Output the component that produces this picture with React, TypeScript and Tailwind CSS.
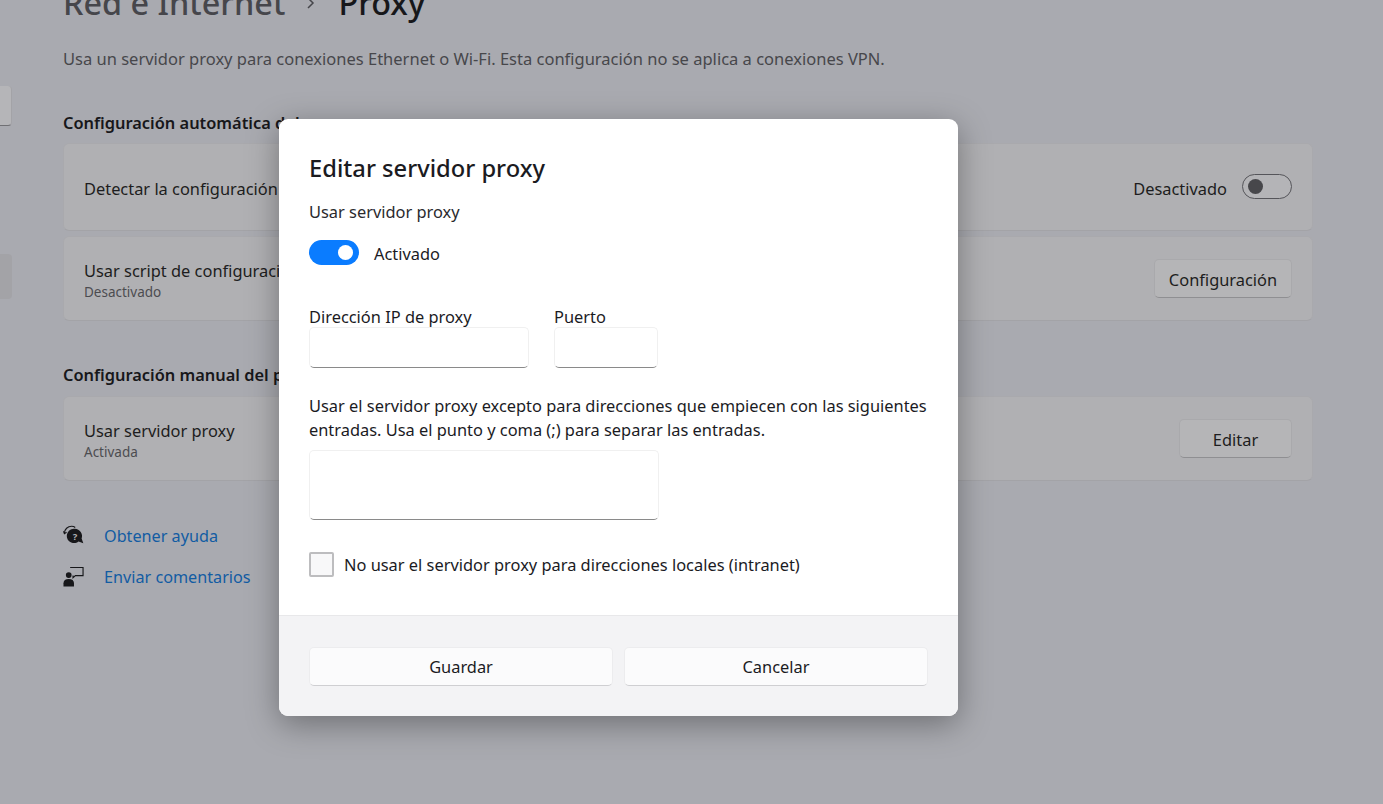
const font = { fontFamily: '"Noto Sans", "Open Sans", sans-serif' };

function Row({ title, sub, children, tall }: { title: string; sub?: string; children: React.ReactNode; tall?: boolean }) {
  return (
    <div className={`flex items-center justify-between rounded-[6px] bg-[#b0b0b3] border border-[#a9a9ad] border-b-[#a3a3a7] pl-[20px] pr-[20px] ${tall ? "h-[88px]" : "h-[85px]"}`}>
      <div className="flex flex-col pt-[4px]">
        <span className="text-[16.4px] leading-[22px] text-[#1d1d20]">{title}</span>
        {sub && <span className="text-[13.5px] leading-[20px] text-[#4c4c50]">{sub}</span>}
      </div>
      {children}
    </div>
  );
}

function BgButton({ w, children }: { w: string; children: React.ReactNode }) {
  return (
    <div className={`${w} h-[39px] pt-[4px] flex items-center justify-center rounded-[5px] bg-[#b5b5b7] border border-[#a9a9ac] border-b-[#8f8f92] text-[16.4px] text-[#1d1d20]`}>
      {children}
    </div>
  );
}

function HelpIcon() {
  return (
    <svg width="21" height="22" viewBox="0 0 22 22" className="shrink-0">
      <path d="M1.5 8C1.5 4 5 .8 9 .8c1.5 0 2.7.4 3.8 1.3" fill="none" stroke="#17171a" strokeWidth="1.2" />
      <path d="M.5 6l1 2.6L3.7 7" fill="none" stroke="#17171a" strokeWidth="1.2" />
      <path d="M12.5 3.5a7.5 7.5 0 0 1 7 10l1.8 5-5-1.8A7.5 7.5 0 1 1 12.5 3.5z" fill="#17171a" />
      <text x="12.5" y="15" fontSize="10" fontWeight="700" textAnchor="middle" fill="#b0b0b3" fontFamily="Noto Sans">?</text>
    </svg>
  );
}

function FeedbackIcon() {
  return (
    <svg width="21" height="22" viewBox="0 0 22 22" className="shrink-0">
      <circle cx="6" cy="9" r="3" fill="#17171a" />
      <path d="M.5 21v-3.5C.5 14.5 2.5 13 6 13s5.5 1.5 5.5 4.5V21z" fill="#17171a" />
      <path d="M7.5 1h13.5v8.5h-8l-2.5 2.2V9.5" fill="none" stroke="#17171a" strokeWidth="1.2" />
    </svg>
  );
}

function Field({ label, w }: { label: string; w: string }) {
  return (
    <div className={`${w} flex flex-col`}>
      <span className="text-[16.4px] leading-[20px] text-[#1b1b1f]">{label}</span>
      <div className="h-[41px] rounded-[5px] bg-white border border-[#f0f0f0] border-b-[#8a8a8a]" />
    </div>
  );
}

function DialogButton({ children }: { children: React.ReactNode }) {
  return (
    <div className="flex-1 h-[39px] pt-[2px] flex items-center justify-center rounded-[5px] bg-[#fbfbfc] border border-[#ececee] border-b-[#cfcfd2] text-[16.4px] text-[#1b1b1f]">
      {children}
    </div>
  );
}

export default function App() {
  return (
    <div style={font} className="relative h-[804px] w-[1383px] overflow-hidden bg-[#a9aab0] flex">
      <aside className="w-[12px] shrink-0 flex flex-col">
        <div className="mt-[86px] h-[40px] rounded-r-[4px] bg-[#b5b5b8] border-r border-[#a3a3a7] border-b-[1px] border-b-[#707074]" />
        <div className="mt-[128px] h-[45px] rounded-r-[4px] bg-[#a3a3a7]" />
      </aside>
      <main className="ml-[51px] w-[1250px] flex flex-col">
        <div className="-mt-[22px] h-[48px] flex items-center">
          <span className="text-[32.4px] leading-[40px] font-medium text-[#46464b]">Red e Internet</span>
          <svg width="12" height="14" viewBox="0 0 12 14" className="ml-[20px] mr-[21px] mt-[1px]">
            <path d="M3 2l5 5-5 5" fill="none" stroke="#46464b" strokeWidth="1.5" />
          </svg>
          <span className="text-[32.4px] leading-[40px] font-medium text-[#17171a]">Proxy</span>
        </div>
        <p className="mt-[22px] text-[16.5px] leading-[22px] text-[#47474b]">
          Usa un servidor proxy para conexiones Ethernet o Wi-Fi. Esta configuración no se aplica a conexiones VPN.
        </p>
        <h2 className="mt-[42px] text-[16.4px] leading-[22px] font-semibold text-[#17171a]">Configuración automática del proxy</h2>
        <div className="mt-[9px] flex flex-col gap-[5px]">
          <Row title="Detectar la configuración automáticamente" tall>
            <div className="flex items-center gap-[15px]">
              <span className="mt-[4px] text-[16.4px] text-[#1d1d20]">Desactivado</span>
              <div className="w-[50px] h-[25px] rounded-full border border-[#55555a] bg-[#b4b4b7] flex items-center pl-[5px]">
                <div className="w-[15px] h-[15px] rounded-full bg-[#47474b]" />
              </div>
            </div>
          </Row>
          <Row title="Usar script de configuración" sub="Desactivado">
            <BgButton w="w-[138px]">Configuración</BgButton>
          </Row>
        </div>
        <h2 className="mt-[43px] text-[16.4px] leading-[22px] font-semibold text-[#17171a]">Configuración manual del proxy</h2>
        <div className="mt-[10px]">
          <Row title="Usar servidor proxy" sub="Activada">
            <BgButton w="w-[113px]">Editar</BgButton>
          </Row>
        </div>
        <div className="mt-[44px] flex items-center gap-[20px]">
          <HelpIcon />
          <span className="text-[16.2px] leading-[22px] text-[#125ca3]">Obtener ayuda</span>
        </div>
        <div className="mt-[19px] flex items-center gap-[20px]">
          <FeedbackIcon />
          <span className="text-[16.2px] leading-[22px] text-[#125ca3]">Enviar comentarios</span>
        </div>
      </main>

      <div className="absolute left-[279px] top-[119px] w-[679px] h-[597px] rounded-[9px] bg-white overflow-hidden flex flex-col shadow-[0_8px_32px_rgba(0,0,0,0.35)]">
        <div className="flex-1 pl-[30px] pr-[30px] flex flex-col">
          <h1 className="mt-[32px] text-[23.7px] leading-[34px] font-medium text-[#1b1b1f]">Editar servidor proxy</h1>
          <span className="mt-[16px] text-[16.4px] leading-[22px] text-[#2a2a2e]">Usar servidor proxy</span>
          <div className="mt-[17px] flex items-start gap-[15px]">
            <div className="w-[50px] h-[25px] rounded-full bg-[#0a7cff] flex items-center justify-end pr-[6px]">
              <div className="w-[15px] h-[15px] rounded-full bg-white" />
            </div>
            <span className="pt-[1px] text-[16.4px] leading-[25px] text-[#1b1b1f]">Activado</span>
          </div>
          <div className="mt-[41px] flex gap-[25px]">
            <Field label="Dirección IP de proxy" w="w-[220px]" />
            <Field label="Puerto" w="w-[104px]" />
          </div>
          <p className="mt-[26px] -mr-[10px] text-[16.4px] leading-[24px] text-[#1b1b1f]">
            Usar el servidor proxy excepto para direcciones que empiecen con las siguientes entradas. Usa el punto y coma (;) para separar las entradas.
          </p>
          <div className="mt-[8px] w-[350px] h-[70px] rounded-[5px] bg-white border border-[#f0f0f0] border-b-[#8a8a8a]" />
          <div className="mt-[32px] flex items-center gap-[10px]">
            <div className="w-[25px] h-[25px] rounded-[2px] bg-[#f8f8f9] border-2 border-[#bdbdbf]" />
            <span className="text-[16.4px] leading-[25px] text-[#1b1b1f]">No usar el servidor proxy para direcciones locales (intranet)</span>
          </div>
        </div>
        <div className="h-[101px] shrink-0 bg-[#f3f3f5] border-t border-[#e8e8ea] pl-[30px] pr-[30px] flex items-center gap-[11px]">
          <DialogButton>Guardar</DialogButton>
          <DialogButton>Cancelar</DialogButton>
        </div>
      </div>
    </div>
  );
}
